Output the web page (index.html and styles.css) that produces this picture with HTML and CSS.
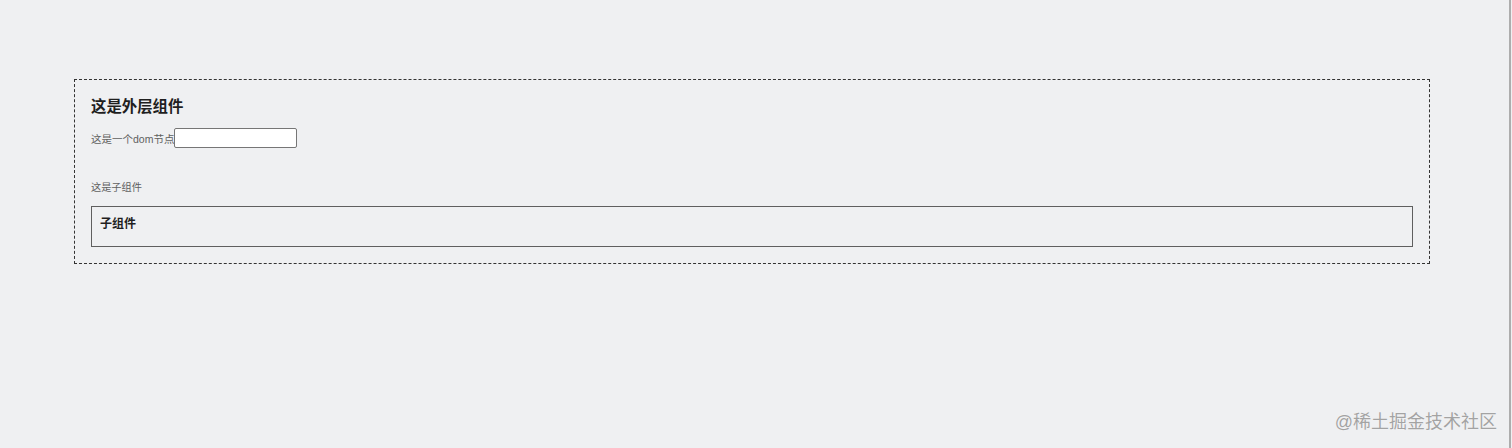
FILE: index.html
```html
<!DOCTYPE html>
<html lang="zh-CN">
<head>
  <meta charset="UTF-8" />
  <meta name="viewport" content="width=device-width, initial-scale=1.0"/>
  <title>组件示例</title>
  <link rel="stylesheet" href="styles.css">
</head>
<body>
  <div class="page">
    <div class="outer">
      <h3 class="outer-title">这是外层组件</h3>
      <div class="dom-row">
        <span>这是一个dom节点</span><input type="text" class="dom-input">
      </div>
      <p class="child-label">这是子组件</p>
      <div class="child">
        <h4 class="child-title">子组件</h4>
      </div>
    </div>
  </div>

  <div class="watermark">@稀土掘金技术社区</div>
</body>
</html>
```

FILE: styles.css
```css
html {
  background-color: #eff0f2;
}

body {
  margin: 0;
  font-family: "Liberation Sans", "Noto Sans CJK SC", sans-serif;
  color: #222;
}

.page {
  box-sizing: border-box;
  width: 1511px;
  height: 448px;
  padding: 79px 79px 0 74px;
  border-right: 2px solid #adadad;
}

.outer {
  border: 1px dashed #333;
  padding: 16px;
}

.outer-title {
  margin: 0;
  font-size: 15.4px;
  line-height: 22px;
  font-weight: bold;
  color: #1f1f1f;
}

.dom-row {
  display: flex;
  align-items: center;
  margin-top: 10px;
  height: 20px;
  font-size: 10.5px;
  color: #606060;
}

.dom-input {
  box-sizing: border-box;
  width: 123px;
  height: 20px;
  margin: 0;
  padding: 0 4px;
  border: 1px solid #767676;
  border-radius: 2px;
  background: #fff;
}

.child-label {
  margin: 33px 0 0;
  font-size: 10.2px;
  line-height: 14px;
  color: #606060;
}

.child {
  margin-top: 11px;
  border: 1px solid #5f5f5f;
  padding: 9px 8px 13px;
}

.child-title {
  margin: 0;
  font-size: 12px;
  line-height: 17px;
  font-weight: bold;
  color: #1f1f1f;
}

.watermark {
  position: absolute;
  right: 15px;
  top: 410px;
  font-size: 18px;
  line-height: 24px;
  color: #a3a3a3;
  text-shadow: 0 0 1px #fff;
}
```
